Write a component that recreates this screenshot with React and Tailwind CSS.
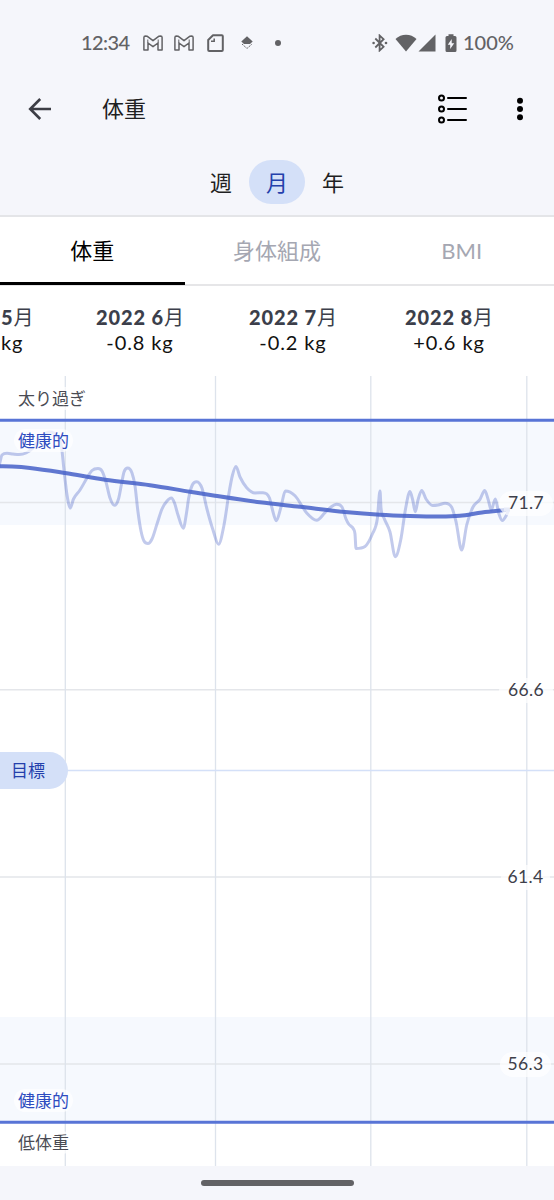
import React, { useState } from "react";

const PERIODS = ["週", "月", "年"];
const TABS = ["体重", "身体組成", "BMI"];

const MONTHS = [
  { id: 6, width: 150, change: "-0.8 kg" },
  { id: 7, width: 156, change: "-0.2 kg" },
  { id: 8, width: 156, change: "+0.6 kg" },
];

const AXIS = [
  { label: "71.7", top: 115, left: 499, width: 54 },
  { label: "66.6", top: 302, left: 499, width: 54 },
  { label: "61.4", top: 489, left: 501, width: 49 },
  { label: "56.3", top: 676, left: 500, width: 51 },
];

const WEIGHT = [
  [-2, 470], [0, 462], [2, 455], [7, 453.3], [13, 454], [19, 454.5], [26, 453], [33, 448], [41, 437],
  [50, 432], [57, 436], [61.5, 447], [64, 470], [67, 495], [70.3, 508], [73.5, 499], [80, 490], [87, 478], [92, 470.5],
  [98, 468.5], [102, 471], [106, 482], [110, 498], [114.5, 505.3], [118.5, 499], [121.5, 484], [124, 472],
  [127.7, 468], [132, 473], [135, 486], [138, 512], [141, 531], [144, 541], [148, 543.5], [152, 539],
  [157, 524], [162, 509], [167, 501], [171.3, 498], [174.5, 503], [178, 515], [183.3, 528.3], [186.5, 513],
  [188.7, 498], [192.3, 485], [196.7, 481.7], [202, 488.3], [206.7, 508], [213, 530], [218.5, 544.3],
  [224, 525], [229, 493], [232.5, 475], [236, 466.5], [240, 477], [246.7, 487.7], [255, 493], [263, 492.7],
  [269.5, 498], [272, 508], [276.3, 520.7], [281, 507], [285.3, 491], [295, 495.7], [306.7, 513],
  [316.7, 520.3], [325, 512.7], [331, 507], [336.7, 504.3], [342, 507], [346, 519], [349, 524.5], [353.5, 529],
  [355, 534], [356, 548.5], [365, 546.5], [372.7, 533.3], [377.3, 519], [380, 491], [381, 508],
  [384, 518], [390, 532], [395.3, 556.7], [400.7, 540], [405.7, 508], [410, 491.5], [412.7, 500],
  [415.3, 511.7], [418, 500], [421.7, 490.5], [426, 499], [432.7, 505.5], [438, 505], [445, 503.3], [451.7, 507.3],
  [456, 521.7], [461.7, 550], [466.7, 525], [473, 507], [480, 499.3], [484.7, 490.5], [488.3, 500],
  [491.3, 510], [495.3, 499], [498.7, 513], [502.3, 520.5], [506, 516], [509, 509],
];

const TREND = [
  [-2, 466.3], [12, 466.6], [30, 468], [65, 473], [105, 479.7], [150, 485.2], [190, 491.7], [215, 495.7],
  [260, 502.3], [300, 506.8], [345, 512], [380, 514.8], [410, 516], [440, 516.5], [460, 515.8],
  [482, 512.5], [506, 510],
];

// monotone cubic, so the curve never overshoots a measurement
function toPath(points) {
  const p = points.map(([x, y]) => [x, y - 376]);
  const slope = p.slice(1).map((q, i) => (q[1] - p[i][1]) / (q[0] - p[i][0]));
  const tan = p.map((_, i) => {
    if (i === 0) return slope[0];
    if (i === p.length - 1) return slope[i - 1];
    const a = slope[i - 1];
    const b = slope[i];
    if (a * b <= 0) return 0;
    return Math.sign(a) * Math.min(Math.abs(a + b) / 2, 3 * Math.abs(a), 3 * Math.abs(b));
  });
  let d = `M${p[0][0]} ${p[0][1]}`;
  for (let i = 1; i < p.length; i++) {
    const h = (p[i][0] - p[i - 1][0]) / 3;
    d += `C${p[i - 1][0] + h} ${p[i - 1][1] + h * tan[i - 1]} ${p[i][0] - h} ${p[i][1] - h * tan[i]} ${p[i][0]} ${p[i][1]}`;
  }
  return d;
}

function MailIcon() {
  return (
    <svg width="20" height="16" viewBox="0 0 20 16" fill="none" stroke="#626265" strokeWidth="1.5" strokeLinejoin="round">
      <path d="M.9 15V2.500Q.9.9 2.500.9L4 1.200l6 4.500 6-4.500L17.500.9Q19.100.9 19.100 2.500V15h-4.100V8L10 11.700 5 8v7Z" />
      <path d="M4.800 4.500V8M15.200 4.500V8" strokeWidth="1" />
    </svg>
  );
}

function StatusBar() {
  return (
    <div className="flex h-[85px] items-center pl-[81px] text-[20px] font-medium text-[#626265]">
      <span className="-mt-[2px] w-[62px] tracking-[-0.6px]">12:34</span>
      <MailIcon />
      <span className="w-[11px]" />
      <MailIcon />
      <svg className="ml-[13px]" width="17" height="18" viewBox="0 0 17 18" fill="none" stroke="#626265" strokeWidth="2">
        <path d="M6 1.200h8.800q1 0 1 1V16q0 1-1 1H2.200q-1 0-1-1V6z" strokeLinejoin="round" />
        <path d="M7.200 4.500v2.700H4" strokeWidth="1.500" />
      </svg>
      <svg className="ml-[17px]" width="12" height="14" viewBox="0 0 12 14" fill="#626265">
        <path d="M6 .3 11.700 5.500 9 8H3L.300 5.500Z" />
        <path d="m1 8 5 4.500L11 8" fill="none" stroke="#626265" strokeWidth="1" strokeDasharray="1.500 .8" />
      </svg>
      <span className="ml-[22px] size-[6px] rounded-full bg-[#626265]" />
      <svg className="ml-[91px]" width="16" height="18" viewBox="0 0 16 18" fill="none" stroke="#626265" strokeWidth="1.800">
        <path d="m3.300 4.500 8.300 8.300-4 3.700v-15l4 3.700-8.300 8.300" />
        <circle cx="1.600" cy="9" r="1.300" fill="#626265" stroke="none" />
        <circle cx="14" cy="9" r="1.300" fill="#626265" stroke="none" />
      </svg>
      <svg className="ml-[7px]" width="22" height="18" viewBox="0 0 22 18" fill="#626265">
        <path d="M11 17.500.500 5Q5 .700 11 .700T21.500 5Z" />
      </svg>
      <svg className="ml-px" width="18" height="18" viewBox="0 0 18 18" fill="#626265">
        <path d="M17.500.500v17H.500Z" />
      </svg>
      <svg className="ml-[9px]" width="12" height="18" viewBox="0 0 12 18">
        <path d="M3.500 2V.300h5V2H10q1.500 0 1.500 1.500v13Q11.500 18 10 18H2Q.500 18 .500 16.500v-13Q.500 2 2 2Z" fill="#626265" />
        <path d="M6.700 5 2.800 10.700h2.400V15l4-5.700H6.700Z" fill="#f5f6fb" />
      </svg>
      <span className="-mt-[2px] ml-[6px]">100%</span>
    </div>
  );
}

function AppBar() {
  return (
    <div className="flex h-[48px] items-center pl-[28px]">
      <svg width="23" height="22" viewBox="0 0 23 22" fill="none" stroke="#3c3d45" strokeWidth="2.600">
        <path d="M12.200 1 2.200 11l10 10M2 11h21" />
      </svg>
      <h1 className="ml-[51px] text-[22px] leading-none text-[#1f1f22]">体重</h1>
      <svg className="ml-[292px]" width="31" height="30" viewBox="0 0 31 30" fill="none" stroke="#000" strokeWidth="2">
        <circle cx="3.500" cy="4" r="2.500" />
        <circle cx="3.500" cy="15" r="2.500" />
        <circle cx="3.500" cy="26" r="2.500" />
        <path d="M10 4h18M10 15h18M10 26h18" strokeLinecap="round" />
      </svg>
      <svg className="ml-[47px]" width="8" height="24" viewBox="0 0 8 24" fill="#000">
        <circle cx="4" cy="3.700" r="3" />
        <circle cx="4" cy="12" r="3" />
        <circle cx="4" cy="20.300" r="3" />
      </svg>
    </div>
  );
}

function Chart() {
  return (
    <div className="relative h-[790px] overflow-hidden">
      <svg className="block" width="554" height="790" viewBox="0 0 554 790" fill="none">
        <path d="M0 44h554v105H0zM0 641h554v105H0z" fill="#f6f9fe" />
        <path d="M0 126.500h554M0 313.700h554M0 501h554M0 688h554" stroke="#e4e6ea" strokeWidth="1.500" />
        <path d="M65.300 0v790M215.500 0v790M370.800 0v790M526.800 0v790" stroke="#dde3ec" strokeWidth="1.300" />
        <path d="M0 394.500h554" stroke="#d4e0f8" strokeWidth="1.600" />
        <path d="M0 44.300h554M0 746.300h554" stroke="#5874d6" strokeWidth="3" />
        <path d={toPath(WEIGHT)} stroke="#405bc4" strokeOpacity=".32" strokeWidth="3" strokeLinejoin="round" />
        <path d={toPath(TREND)} stroke="#4560c8" strokeOpacity=".85" strokeWidth="4" />
        <path d="M504 133.500h6" stroke="#aebbe8" strokeWidth="4" />
      </svg>
      {AXIS.map(a => (
        <span
          key={a.label}
          className="absolute flex h-[25px] items-center justify-center rounded-full bg-white/70 text-[17.5px] tracking-[0.3px] text-[#3e404a]"
          style={{ top: a.top, left: a.left, width: a.width }}
        >
          {a.label}
        </span>
      ))}
      <span className="absolute left-[14px] top-[11px] rounded-full bg-white/70 px-1 text-[17px] leading-[23px] text-[#4a4b53]">太り過ぎ</span>
      <span className="absolute left-[14px] top-[53px] rounded-full bg-white/70 px-1 text-[17px] leading-[23px] text-[#2e4cc0]">健康的</span>
      <span className="absolute left-[14px] top-[713px] rounded-full bg-white/70 px-1 text-[17px] leading-[23px] text-[#2e4cc0]">健康的</span>
      <span className="absolute left-[14px] top-[755px] rounded-full bg-white/70 px-1 text-[17px] leading-[23px] text-[#4a4b53]">低体重</span>
      <span className="absolute left-0 top-[376px] flex h-[37px] w-[68px] items-center rounded-r-full bg-[#d4e0f8] pl-[11px] text-[17px] text-[#2440ac]">目標</span>
    </div>
  );
}

function Month({ title, change }) {
  return (
    <>
      <div className="whitespace-nowrap text-[20px] font-black leading-[25px] tracking-[0.9px] text-[#3c3f4b]">
        {title}<span className="font-normal tracking-normal">月</span>
      </div>
      <div className="text-[20px] leading-[25px] tracking-[0.9px] text-[#111]">{change}</div>
    </>
  );
}

export default function App() {
  const [period, setPeriod] = useState("月");
  const [tab, setTab] = useState("体重");

  return (
    <div lang="ja" className="flex h-[1200px] w-[554px] flex-col overflow-hidden bg-white font-['Lato','Noto_Sans_CJK_JP',sans-serif]">
      <header className="h-[217px] border-b-2 border-[#e4e5e8] bg-[#f5f6fb]">
        <StatusBar />
        <AppBar />
        <div className="mt-[27px] flex justify-center">
          {PERIODS.map(p => (
            <button
              key={p}
              onClick={() => setPeriod(p)}
              className={`h-[44px] w-[56px] rounded-full pt-[2px] text-[22px] leading-none ${period === p ? "bg-[#d4e0f8] text-[#2440ac]" : "text-[#1f1f22]"}`}
            >
              {p}
            </button>
          ))}
        </div>
      </header>

      <nav className="grid h-[69px] grid-cols-3 border-b-2 border-[#e6e6e8]">
        {TABS.map(t => (
          <button
            key={t}
            onClick={() => setTab(t)}
            className={`h-[68px] border-b-[3px] pt-[2px] text-[22px] leading-none ${tab === t ? "border-black text-black" : "border-transparent text-[#a5a7b2]"}`}
          >
            {t}
          </button>
        ))}
      </nav>

      <div className="flex h-[90px] pt-[19px] text-center">
        {/* the month before, scrolled mostly out of view */}
        <div className="w-[65px] pl-px text-left">
          <Month title="5" change="kg" />
        </div>
        {MONTHS.map(m => (
          <div key={m.id} style={{ width: m.width }}>
            <Month title={`2022 ${m.id}`} change={m.change} />
          </div>
        ))}
      </div>

      <Chart />

      <footer className="flex h-[34px] items-center justify-center bg-[#f5f6fb]">
        <div className="h-[6px] w-[153px] rounded-full bg-[#626265]" />
      </footer>
    </div>
  );
}
